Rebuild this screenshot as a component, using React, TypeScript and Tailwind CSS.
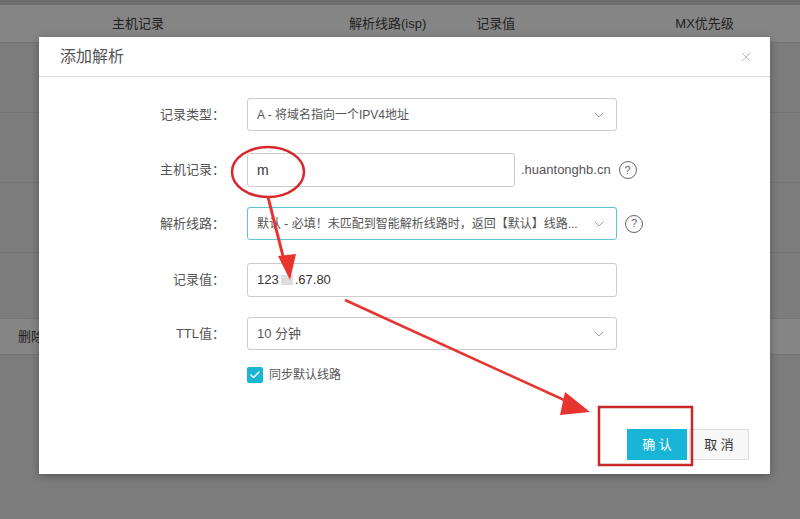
import React from "react";
import { ChevronDown, Check, X } from "lucide-react";

const font = { fontFamily: '"Liberation Sans", "Noto Sans CJK SC", sans-serif' };

function Label({ children }: { children: React.ReactNode }) {
  return <div className="w-[208px] shrink-0 pr-[22px] text-right text-[13px] text-[#555]">{children}</div>;
}

function Help() {
  return (
    <div className="ml-[8px] flex h-[18px] w-[18px] items-center justify-center rounded-full border border-[#666] text-[11px] text-[#666]">?</div>
  );
}

function Select({ text, active, small }: { text: string; active?: boolean; small?: boolean }) {
  return (
    <div className={`flex h-[33px] w-[370px] items-center justify-between rounded-[3px] border bg-white px-[9px] ${active ? "border-[#5fc5d8]" : "border-[#ccc]"}`}>
      <span className={`whitespace-nowrap text-[#555] ${small ? "text-[12px]" : "text-[13px]"}`}>{text}</span>
      <ChevronDown className="ml-2 h-4 w-4 shrink-0 text-[#888]" strokeWidth={1.2} />
    </div>
  );
}

export default function App() {
  return (
    <div style={font} className="relative h-[519px] w-[800px] overflow-hidden bg-[#7c7c7c]">
      {/* underlying page */}
      <div className="h-[5px] bg-[#6e6e6e]" />
      <div className="flex h-[38px] items-center border-b border-[#747474] bg-[#858585] text-[13px] text-[#222]">
        <span className="ml-[112px]">主机记录</span>
        <span className="ml-[185px]">解析线路(isp)</span>
        <span className="ml-[50px]">记录值</span>
        <span className="ml-[160px]">MX优先级</span>
      </div>
      <div className="h-[70px] border-b border-[#747474]" />
      <div className="h-[70px] border-b border-[#747474]" />
      <div className="h-[70px] border-b border-[#747474]" />
      <div className="h-[66px] border-b border-[#747474]" />
      <div className="flex h-[36px] items-center border-b border-[#747474] bg-[#858585] pl-[18px] text-[13px] text-[#222]">删除</div>

      {/* modal */}
      <div className="absolute left-[39px] top-[37px] h-[437px] w-[731px] bg-white shadow-[0_2px_8px_rgba(0,0,0,0.3)]">
        <div className="flex h-[40px] items-center justify-between border-b border-[#ddd] pl-[21px] pr-[16px]">
          <span className="text-[16px] text-[#555]">添加解析</span>
          <X className="h-4 w-4 text-[#aaa]" strokeWidth={1.2} />
        </div>
        <div className="pt-[21px]">
          <div className="flex items-center">
            <Label>记录类型：</Label>
            <Select small text="A - 将域名指向一个IPV4地址" />
          </div>
          <div className="mt-[22px] flex items-center">
            <Label>主机记录：</Label>
            <div className="flex h-[34px] w-[268px] items-center rounded-[3px] border border-[#ccc] px-[9px] text-[14px] text-[#333]">m</div>
            <span className="ml-[6px] text-[13px] text-[#555]">.huantonghb.cn</span>
            <Help />
          </div>
          <div className="mt-[20px] flex items-center">
            <Label>解析线路：</Label>
            <Select active small text="默认 - 必填！未匹配到智能解析线路时，返回【默认】线路..." />
            <Help />
          </div>
          <div className="mt-[23px] flex items-center">
            <Label>记录值：</Label>
            <div className="flex h-[34px] w-[370px] items-center rounded-[3px] border border-[#ccc] px-[9px] text-[13px] text-[#333]">
              123<span className="mx-[2px] inline-block h-[10px] w-[12px] bg-[#ddd]" />.67.80
            </div>
          </div>
          <div className="mt-[20px] flex items-center">
            <Label>TTL值：</Label>
            <Select text="10 分钟" />
          </div>
          <div className="mt-[16px] flex items-center pl-[208px]">
            <div className="flex h-[16px] w-[16px] items-center justify-center rounded-[2px] bg-[#19b5d1]">
              <Check className="h-3 w-3 text-white" strokeWidth={3} />
            </div>
            <span className="ml-[6px] text-[12px] text-[#555]">同步默认线路</span>
          </div>
        </div>
        <div className="absolute bottom-[14px] right-[21px] flex">
          <div className="flex h-[31px] w-[60px] items-center justify-center bg-[#19b5d6] text-[13px] text-white">确 认</div>
          <div className="ml-[2px] flex h-[31px] w-[60px] items-center justify-center border border-[#ddd] bg-[#f7f7f7] text-[13px] text-[#333]">取 消</div>
        </div>
      </div>

      {/* annotations */}
      <svg className="absolute left-0 top-0" width="800" height="519">
        <ellipse cx="268" cy="172" rx="36" ry="25" fill="none" stroke="#d9262b" strokeWidth="2.5" />
        <line x1="268" y1="197" x2="286" y2="268" stroke="#e8342f" strokeWidth="3" />
        <polygon points="278,256 296,254 290,280" fill="#e8342f" />
        <line x1="345" y1="300" x2="575" y2="405" stroke="#e8342f" strokeWidth="2.5" />
        <polygon points="565,392 590,412 560,415" fill="#e8342f" />
        <rect x="599" y="407" width="93" height="58" fill="none" stroke="#c8272c" strokeWidth="2.5" />
      </svg>
    </div>
  );
}
